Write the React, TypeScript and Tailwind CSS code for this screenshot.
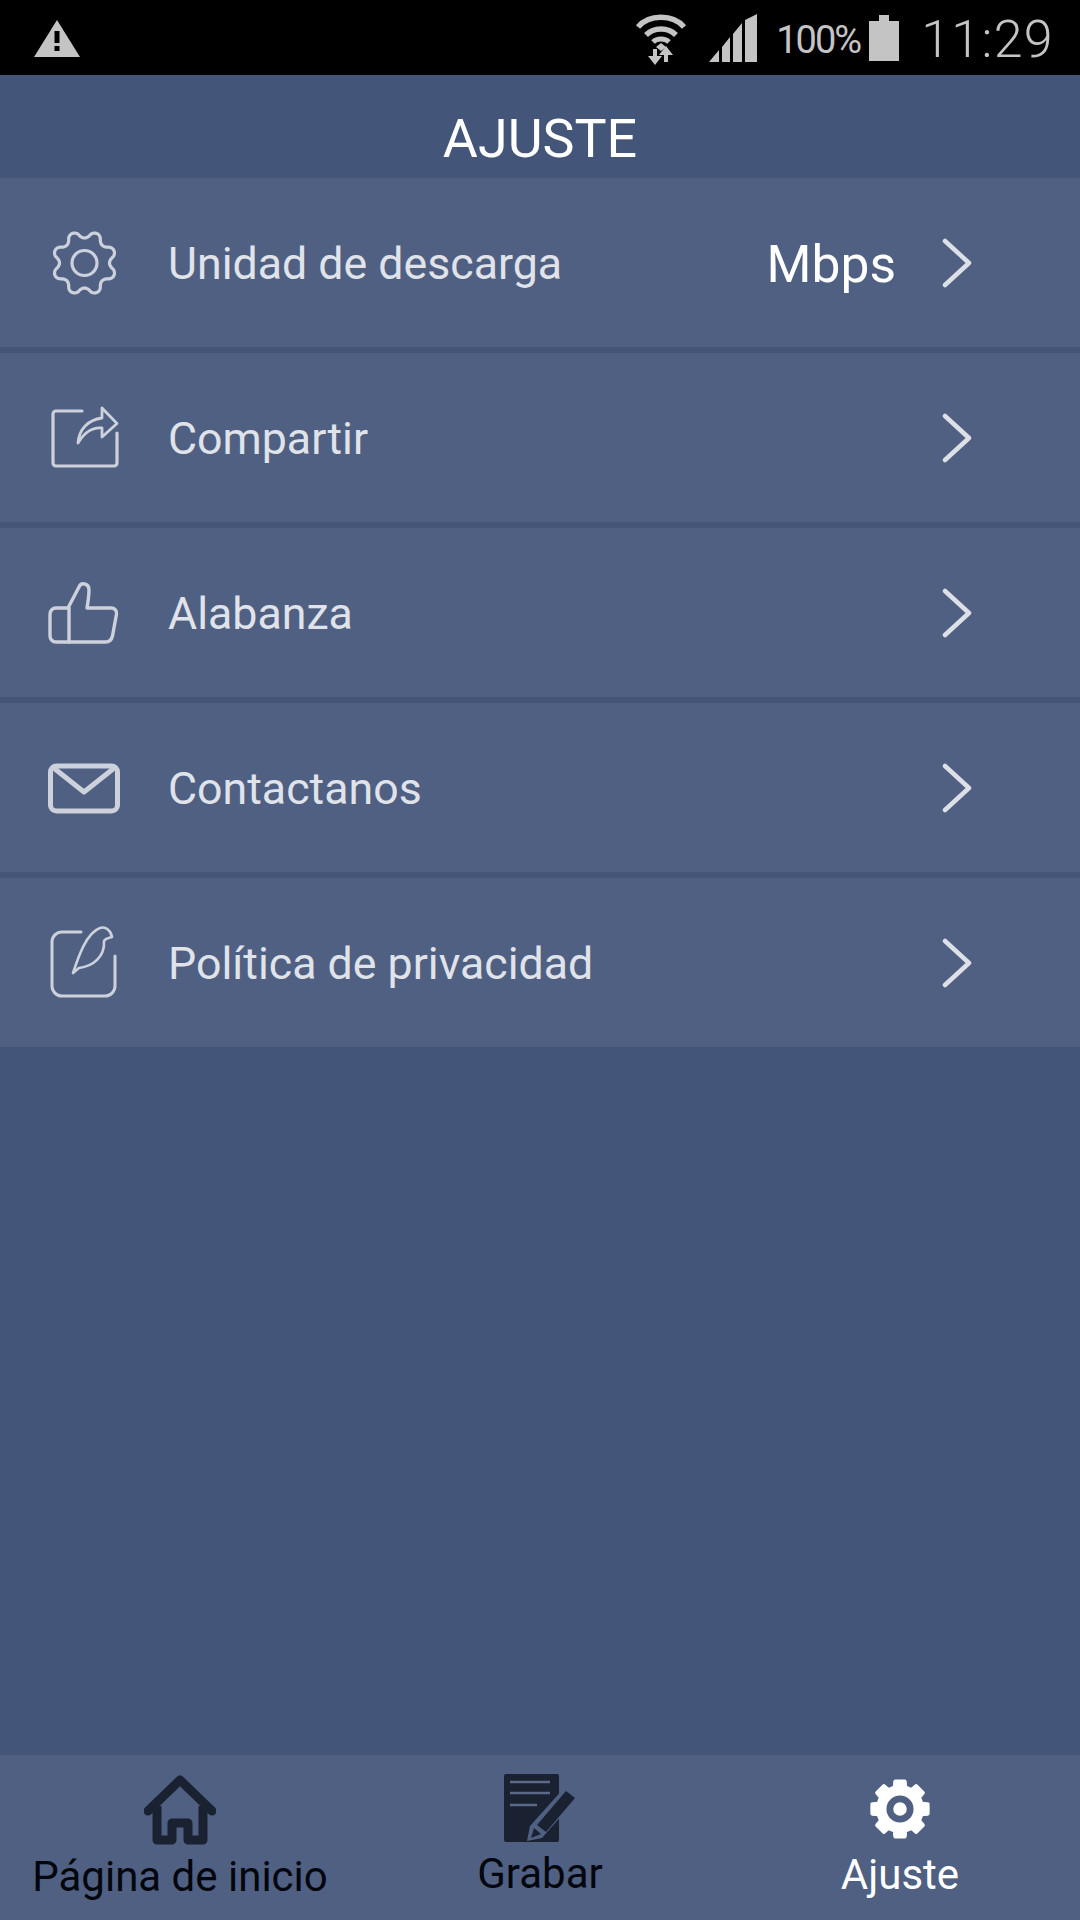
import React from 'react'

const rowIconClass = 'w-[80px] h-[80px] text-[#cdd1dc]'

// outline of a wavy 8 tooth gear, sampled around the circle
function wavyGear(cx: number, cy: number, r: number, amp: number) {
  const pts: string[] = []
  for (let i = 0; i < 160; i++) {
    const a = (i / 160) * Math.PI * 2
    const w = -Math.cos(8 * a)
    const rad = r + amp * Math.sign(w) * Math.pow(Math.abs(w), 0.7)
    pts.push(`${(cx + rad * Math.sin(a)).toFixed(2)},${(cy - rad * Math.cos(a)).toFixed(2)}`)
  }
  return pts.join(' ')
}

// solid gear with square teeth, one tooth pointing up
function toothGear(cx: number, cy: number, outer: number, inner: number) {
  const pts: string[] = []
  for (let i = 0; i < 8; i++) {
    const a = (i / 8) * Math.PI * 2
    const at = (d: number, rad: number) => {
      const t = a + d
      pts.push(`${(cx + rad * Math.sin(t)).toFixed(2)},${(cy - rad * Math.cos(t)).toFixed(2)}`)
    }
    at(-0.24, inner)
    at(-0.17, outer)
    at(0.17, outer)
    at(0.24, inner)
  }
  return pts.join(' ')
}

function GearOutline() {
  return (
    <svg viewBox="0 0 80 80" className={rowIconClass} fill="none" stroke="currentColor" strokeWidth="3.200" strokeLinejoin="round">
      <polygon points={wavyGear(38.5, 40, 28.5, 3.5)} />
      <circle cx="38.5" cy="40" r="12.500" />
    </svg>
  )
}

function ShareOutline() {
  return (
    <svg viewBox="0 0 80 80" className={rowIconClass} fill="none" stroke="currentColor" strokeLinejoin="round" strokeLinecap="round">
      <path d="M36 13H10a3 3 0 0 0-3 3v49a3 3 0 0 0 3 3h58a3 3 0 0 0 3-3V35" strokeWidth="3.200" />
      <path d="M32 45c1-14 10-23 24-25V10l15 15.500L56 39V30c-10-1-18 5-24 15z" strokeWidth="2.800" />
    </svg>
  )
}

function ThumbOutline() {
  return (
    <svg viewBox="0 0 80 80" className={rowIconClass} fill="none" stroke="currentColor" strokeWidth="3.400" strokeLinejoin="round" strokeLinecap="round">
      <path d="M4 41a6 6 0 0 1 6-6h12l11-21c2-5 10-4 10 3 0 6-1 12-2 18h24c4 0 6 3 5.500 6l-4 22c-1 4-3 6-7 6H10a6 6 0 0 1-6-6z" />
      <path d="M23 35v34" />
    </svg>
  )
}

function MailOutline() {
  return (
    <svg viewBox="0 0 80 80" className={rowIconClass} fill="none" stroke="currentColor" strokeWidth="5" strokeLinejoin="round" strokeLinecap="round">
      <rect x="4.500" y="18" width="67" height="45" rx="6" />
      <path d="M9 21l29 23 29-23" />
    </svg>
  )
}

function QuillOutline() {
  return (
    <svg viewBox="0 0 80 80" className={rowIconClass} fill="none" stroke="currentColor" strokeWidth="2.600" strokeLinejoin="round" strokeLinecap="round">
      <path d="M35 9H16A10 10 0 0 0 6 19v44a10 10 0 0 0 10 10h43a10 10 0 0 0 10-10V33" strokeWidth="3" />
      <path d="M27 50C32 35 40 10 54 5c6-2 11 3 12 9-4 1-7 2-8 4 1 15-10 25-25 27l-6 5" />
    </svg>
  )
}

function Chevron() {
  return (
    <svg viewBox="0 0 32 52" className="w-[32px] h-[52px]" fill="none" stroke="#dde0e7" strokeWidth="4.500" strokeLinecap="round" strokeLinejoin="round">
      <path d="M3 4l24 22L3 48" />
    </svg>
  )
}

function SettingRow({ icon, label, value }: { icon: React.ReactNode; label: string; value?: string }) {
  return (
    <div className="h-[169px] bg-[#4f6082] flex items-center pl-[46px] pr-[106px]">
      <div className="w-[80px] h-[80px] shrink-0">{icon}</div>
      <div className="ml-[42px] pt-[4px] flex-1 text-[44.7px] text-[#e0e3ea]">{label}</div>
      {value && <div className="mr-[46px] pt-[4px] text-[51.5px] text-white">{value}</div>}
      <Chevron />
    </div>
  )
}

function StatusBar() {
  return (
    <div className="h-[75px] bg-black flex items-center text-[#c4c4c4] pl-[33px] pr-[26px]">
      <svg viewBox="0 0 48 40" className="w-[48px] h-[40px]">
        <path d="M24 2L47 39H1z" fill="#c4c4c4" />
        <rect x="21.500" y="13" width="5" height="12" fill="#000" />
        <rect x="21.500" y="28" width="5" height="5" fill="#000" />
      </svg>
      <div className="flex-1" />
      <svg viewBox="0 0 52 54" className="w-[52px] h-[54px]" fill="none" stroke="#c4c4c4" strokeWidth="4">
        <path d="M3 16C14 3 38 3 49 16" strokeWidth="5.500" />
        <path d="M11 24c8-8 22-8 30 0" strokeWidth="5.500" />
        <path d="M18 31c4-4 12-4 16 0" strokeWidth="5" />
        <path d="M21 36l5-4 5 4-5 4z" fill="#c4c4c4" stroke="none" />
        <path d="M20 38v11M31 51V42" strokeWidth="4" />
        <path d="M13 45h14l-7 9zM24 44l7-9 7 9z" fill="#c4c4c4" stroke="none" />
      </svg>
      <svg viewBox="0 0 48 48" className="ml-[22px] w-[48px] h-[48px]" fill="#c4c4c4">
        <path d="M0 48L10 36v12zM13 48V33l8-10v25zM24 48V20l9-11v39zM36 48V6l12-6v48z" />
      </svg>
      <div className="ml-[19px] w-[84px] pt-[5px] text-[38px] tracking-[-2px] whitespace-nowrap">100%</div>
      <svg viewBox="0 0 30 46" className="ml-[9px] w-[30px] h-[46px]" fill="#c4c4c4">
        <path d="M10 0h10v6h10v40H0V6h10z" />
      </svg>
      <div className="ml-[22px] pt-[5px] text-[52px] font-light tracking-[1.3px] leading-none">11:29</div>
    </div>
  )
}

function TabItem({ icon, label, className, labelClass }: { icon: React.ReactNode; label: string; className: string; labelClass: string }) {
  return (
    <div className={`flex flex-col items-center ${className}`}>
      {icon}
      <div className={`text-[42px] leading-[46px] whitespace-nowrap ${labelClass}`}>{label}</div>
    </div>
  )
}

export default function App() {
  return (
    <div className="w-[1080px] h-[1920px] flex flex-col bg-[#435578] font-['Roboto',sans-serif] overflow-hidden">
      <StatusBar />

      <div className="h-[103px] pt-[26px] flex items-center justify-center text-[53.8px] text-white">AJUSTE</div>

      <div className="flex flex-col gap-[6px]">
        <SettingRow icon={<GearOutline />} label="Unidad de descarga" value="Mbps" />
        <SettingRow icon={<ShareOutline />} label="Compartir" />
        <SettingRow icon={<ThumbOutline />} label="Alabanza" />
        <SettingRow icon={<MailOutline />} label="Contactanos" />
        <SettingRow icon={<QuillOutline />} label="Política de privacidad" />
      </div>

      <div className="flex-1" />

      <div className="h-[165px] bg-[#4f6082] flex justify-between">
        <TabItem
          className="w-[360px] pt-[18px]"
          labelClass="text-[#03060d] mt-[9px]"
          label="Página de inicio"
          icon={
            <svg viewBox="0 0 72 72" className="w-[72px] h-[72px]" fill="none" stroke="#1a2130" strokeWidth="9" strokeLinejoin="round" strokeLinecap="round">
              <path d="M4 38L36 7l32 31" />
              <path d="M13 33v34h15V50h16v17h15V33" strokeLinecap="butt" />
            </svg>
          }
        />
        <TabItem
          className="w-[360px] pt-[19px]"
          labelClass="text-[#03060d] mt-[9px]"
          label="Grabar"
          icon={
            <svg viewBox="0 0 72 68" className="w-[72px] h-[68px]">
              <rect x="0" y="0" width="55" height="68" rx="2" fill="#1a2130" />
              <path d="M6 8h40M6 19h40M6 31h27" stroke="#5b6a88" strokeWidth="2.500" />
              <path d="M60 14l13 10-35 40-15 3 3-15z" fill="#4f6082" />
              <path d="M62 17l9 7-29 34-9-7z" fill="#1a2130" />
              <path d="M30 54l7 6-10 4z" fill="#1a2130" />
            </svg>
          }
        />
        <TabItem
          className="w-[360px] pt-[23px]"
          labelClass="text-white mt-[12px]"
          label="Ajuste"
          icon={
            <svg viewBox="0 0 64 64" className="w-[62px] h-[62px]">
              <polygon points={toothGear(32, 32, 29, 23)} fill="#ffffff" stroke="#ffffff" strokeWidth="4" strokeLinejoin="round" />
              <circle cx="32" cy="32" r="10.500" fill="#ffffff" stroke="#4f6082" strokeWidth="7" />
            </svg>
          }
        />
      </div>
    </div>
  )
}
